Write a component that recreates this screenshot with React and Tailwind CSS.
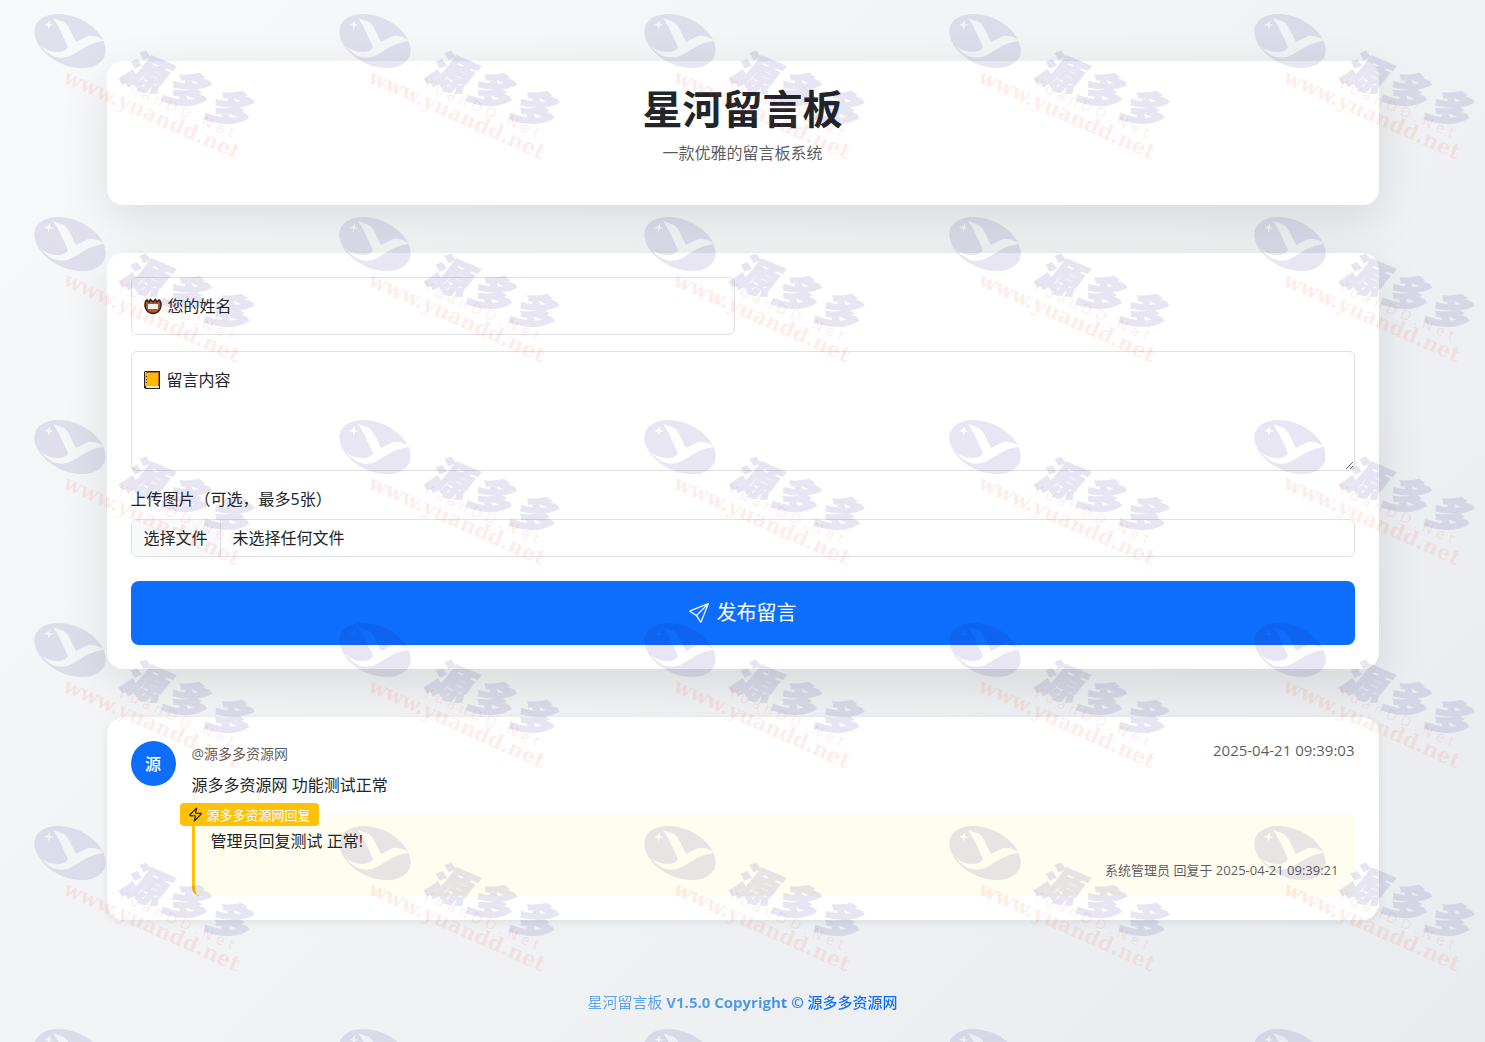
import { useState } from "react";
import { BsSend } from "react-icons/bs";
import { Zap } from "lucide-react";

const messages = [
  {
    id: 1,
    avatar: "源",
    author: "@源多多资源网",
    time: "2025-04-21 09:39:03",
    content: "源多多资源网 功能测试正常",
    reply: {
      badge: "源多多资源网回复",
      content: "管理员回复测试 正常!",
      meta: "系统管理员 回复于 2025-04-21 09:39:21",
    },
  },
];

const WatermarkTile = ({ logoOnly }) => (
  <svg width="305" height="203" viewBox="0 0 305 203" className="shrink-0">
    <path
      fill="#1a0a80"
      fillOpacity="0.1"
      fillRule="evenodd"
      d="M35.6 24.9A38 25 25 0 1 104.4 57.1A38 25 25 0 1 35.6 24.9Z M53 18L64 22Q68 25 71 32L76 42L88 36Q95 35 102 39L103 41Q95 42 87 46L72 55Q65 59 56 57Q48 55 40 45Q47 52 57 52Q66 52 68 47L62 34Q58 25 53 18Z M50 20L50 24L54 25L50 26L48 30L48 26L44 25L48 23Z"
    />
    {!logoOnly && (
      <>
        <g
          transform="translate(118 78) rotate(23)"
          fill="#1a0a80"
          stroke="#1a0a80"
          strokeWidth="1"
          opacity="0.1"
          className="text-[42px] font-black italic"
        >
          <text x="0">源</text>
          <text x="46">多</text>
          <text x="92">多</text>
        </g>
        <text
          transform="translate(117 87) rotate(24)"
          fill="#ff5a3c"
          fillOpacity="0.12"
          className="font-['DejaVu_Sans',sans-serif] text-sm"
        >
          Y u a n D D . N e t
        </text>
        <text
          transform="translate(62 82) rotate(24)"
          fill="#ff3c1e"
          fillOpacity="0.1"
          className="font-['DejaVu_Serif',serif] text-[21px] font-bold"
        >
          www.yuandd.net
        </text>
      </>
    )}
  </svg>
);

const Watermark = () => (
  <div
    aria-hidden="true"
    className="pointer-events-none absolute inset-0 z-10 overflow-hidden select-none"
  >
    {[0, 1, 2, 3, 4, 5].map((row) => (
      <div key={row} className="flex">
        {[0, 1, 2, 3, 4].map((col) => (
          <WatermarkTile key={col} logoOnly={row === 5} />
        ))}
      </div>
    ))}
  </div>
);

const NameBadgeIcon = () => (
  <svg width="18" height="18" viewBox="0 0 18 18">
    <path
      d="M1 8Q1 4 3 3L5 5L6.500 2.500L9 5L11.500 2.500L13 5L15 3Q17 4 17 8V9Q16 16 9 16.500Q2 16 1 9Z"
      fill="#b5571f"
      stroke="#2a2022"
      strokeWidth="1.500"
    />
    <rect x="4" y="7" width="10" height="5" fill="#f3f3f3" />
  </svg>
);

const NotebookIcon = () => (
  <svg width="18" height="20" viewBox="0 0 18 20">
    <path d="M2 1H17V19H4Q1 19 1 17V2Z" fill="#2a2022" />
    <path d="M3 16H16V18H4Q3 18 3 16Z" fill="#f3e6d0" />
    <path d="M2 2H16V16H2Z" fill="#ffb900" />
    <path d="M15.500 2V16M3 2.500H16" stroke="#b5651f" />
    <path d="M3.500 6V13" stroke="#2a2022" strokeDasharray="1 2" />
  </svg>
);

const Header = () => (
  <header className="mb-12 rounded-2xl bg-white p-6 text-center shadow-[0_16px_48px_rgba(0,0,0,0.1)]">
    <h1 className="mb-2 text-[40px] leading-[48px] font-bold">星河留言板</h1>
    <p className="mb-4 text-[#212529]/75">一款优雅的留言板系统</p>
  </header>
);

const MessageForm = () => {
  const [fileText, setFileText] = useState("未选择任何文件");

  const handleFiles = (e) => {
    const count = e.target.files.length;
    setFileText(count ? `${count} 个文件` : "未选择任何文件");
  };

  return (
    <form
      onSubmit={(e) => e.preventDefault()}
      className="mb-12 rounded-2xl bg-white p-6 shadow-[0_16px_48px_rgba(0,0,0,0.1)]"
    >
      <div className="grid gap-4 md:grid-cols-2">
        <div className="relative">
          <input
            id="name"
            type="text"
            placeholder=" "
            className="peer block h-[58px] w-full rounded-md border border-[#dee2e6] bg-white px-3"
          />
          <label
            htmlFor="name"
            className="pointer-events-none absolute top-[17px] left-[13px] flex items-center gap-1.5 peer-[:not(:placeholder-shown)]:hidden"
          >
            <NameBadgeIcon />
            您的姓名
          </label>
        </div>
        <div className="relative md:col-span-2">
          <textarea
            id="content"
            placeholder=" "
            className="peer block h-[120px] w-full rounded-md border border-[#dee2e6] bg-white px-3 py-4"
          />
          <label
            htmlFor="content"
            className="pointer-events-none absolute top-[17px] left-3 flex items-center gap-1.5 peer-[:not(:placeholder-shown)]:hidden"
          >
            <NotebookIcon />
            留言内容
          </label>
        </div>
        <div className="md:col-span-2">
          <label htmlFor="images" className="mb-2 block">
            上传图片（可选，最多5张）
          </label>
          <input
            id="images"
            type="file"
            multiple
            accept="image/*"
            onChange={handleFiles}
            className="sr-only"
          />
          <label
            htmlFor="images"
            className="flex h-[38px] cursor-pointer items-stretch overflow-hidden rounded-md border border-[#dee2e6] bg-white"
          >
            <span className="flex items-center border-r border-[#dee2e6] bg-[#f8f9fa] px-3">
              选择文件
            </span>
            <span className="flex items-center px-3">{fileText}</span>
          </label>
        </div>
      </div>
      <button
        type="submit"
        className="mt-6 flex h-16 w-full cursor-pointer items-center justify-center gap-2 rounded-lg bg-[#0d6efd] text-xl text-white"
      >
        <BsSend />
        发布留言
      </button>
    </form>
  );
};

const MessageCard = ({ message }) => (
  <article className="flex gap-4 rounded-2xl bg-white p-6 shadow-[0_2px_8px_rgba(0,0,0,0.08)]">
    <div className="flex size-[45px] shrink-0 items-center justify-center rounded-full bg-[#0d6efd] font-medium text-white">
      {message.avatar}
    </div>
    <div className="flex-1">
      <div className="mb-2 flex items-start justify-between">
        <span className="pt-0.5 text-sm leading-[22px] text-[#212529]/75">
          {message.author}
        </span>
        <time className="text-[15px] leading-[18px] text-[#212529]/75">
          {message.time}
        </time>
      </div>
      <p>{message.content}</p>
      <div className="relative mt-4 rounded-lg border-l-3 border-[#ffc107] bg-[#fffdf0] p-4">
        <span className="absolute -top-2.5 -left-[15px] flex h-[23px] items-center gap-1 rounded bg-[#ffc107] px-2 text-[13px] text-white">
          <Zap className="size-[15px] text-[#212529]" />
          {message.reply.badge}
        </span>
        <p>{message.reply.content}</p>
        <p className="mt-2 text-right text-[13px] leading-[19px] text-[#212529]/75">
          {message.reply.meta}
        </p>
      </div>
    </div>
  </article>
);

const Footer = () => (
  <footer className="pt-[70px] pb-4 text-center text-[15px] leading-6">
    <a
      href="#"
      className="bg-linear-to-r from-[#5ea8ee] via-[#4a94e6] via-60% to-[#0d6efd] to-72% bg-clip-text text-transparent"
    >
      星河留言板 <b>V1.5.0 Copyright ©</b>{" "}
      <span className="font-medium">源多多资源网</span>
    </a>
  </footer>
);

const App = () => {
  return (
    <div className="relative min-h-screen overflow-hidden bg-linear-135 from-[#f8f9fa] to-[#e9ecef] font-['Open_Sans','Noto_Sans_CJK_SC',sans-serif] text-base leading-6 text-[#212529]">
      <div className="mx-auto max-w-[1320px] px-6 pt-[61px]">
        <Header />
        <MessageForm />
        {messages.map((message) => (
          <MessageCard key={message.id} message={message} />
        ))}
        <Footer />
      </div>
      <Watermark />
    </div>
  );
};

export default App;
